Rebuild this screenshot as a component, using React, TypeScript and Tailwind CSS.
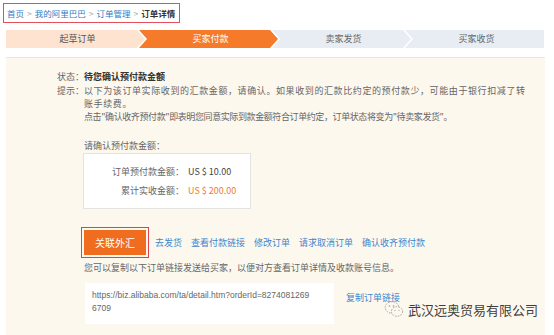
const steps = [
  { label: "起草订单", cls: "bg-[#fde3d0] text-[#555]" },
  { label: "买家付款", cls: "bg-[#f57a2a] text-white" },
  { label: "卖家发货", cls: "bg-[#e8edf3] text-[#666]" },
  { label: "买家收货", cls: "bg-[#e8edf3] text-[#666]" },
];

const shapes = [
  "[clip-path:polygon(0_0,calc(100%_-_8px)_0,100%_50%,calc(100%_-_8px)_100%,0_100%)]",
  "-ml-[6px] [clip-path:polygon(0_0,calc(100%_-_8px)_0,100%_50%,calc(100%_-_8px)_100%,0_100%,8px_50%)]",
  "-ml-[6px] [clip-path:polygon(0_0,calc(100%_-_8px)_0,100%_50%,calc(100%_-_8px)_100%,0_100%,8px_50%)]",
  "-ml-[6px] [clip-path:polygon(0_0,100%_0,100%_100%,0_100%,8px_50%)]",
];

const links = ["去发货", "查看付款链接", "修改订单", "请求取消订单", "确认收齐预付款"];

const WeChatMark = () => (
  <svg width="20" height="18" viewBox="0 0 20 18" fill="none">
    <ellipse cx="8" cy="7.5" rx="6.8" ry="5.8" stroke="#9a9a9a" strokeWidth="0.9" strokeDasharray="1.6 1.2" />
    <ellipse cx="13" cy="11.5" rx="5.6" ry="4.8" fill="#fdf8ee" stroke="#9a9a9a" strokeWidth="0.9" strokeDasharray="1.6 1.2" />
    <circle cx="5.5" cy="6" r="0.8" fill="#9a9a9a" />
    <circle cx="9.5" cy="6" r="0.8" fill="#9a9a9a" />
    <circle cx="11" cy="10.5" r="0.6" fill="#9a9a9a" />
    <circle cx="15" cy="10.5" r="0.6" fill="#9a9a9a" />
  </svg>
);

export default function App() {
  return (
    <div className="relative w-[554px] h-[335px] bg-white overflow-hidden flex flex-col font-['Noto_Sans_CJK_SC',sans-serif]">
      {/* breadcrumb */}
      <div className="ml-[3px] mt-[3px] w-[177px] h-[20px] border border-[#e4505a] flex items-center pl-[3px] gap-[3px] text-[8.5px] leading-none">
        <span className="text-[#2d7cc8]">首页</span>
        <span className="text-[#aaa]">&gt;</span>
        <span className="text-[#2d7cc8]">我的阿里巴巴</span>
        <span className="text-[#aaa]">&gt;</span>
        <span className="text-[#2d7cc8]">订单管理</span>
        <span className="text-[#aaa]">&gt;</span>
        <span className="text-[#333] font-bold">订单详情</span>
      </div>

      {/* steps */}
      <div className="mt-[7px] ml-[6px] w-[538px] h-[18px] flex">
        {steps.map((s, i) => (
          <div
            key={s.label}
            className={`flex-1 h-full flex items-center justify-center pl-[4px] text-[9px] ${s.cls} ${shapes[i]}`}
          >
            {s.label}
          </div>
        ))}
      </div>

      {/* panel */}
      <div className="mt-[9px] ml-[6px] w-[539px] flex-1 bg-[#fdf8ee] border-t border-[#f8e4cc] pl-[51px] pt-[12px] text-[9px] leading-[13px] text-[#666]">
        <div className="flex">
          <span className="w-[27px]">状态：</span>
          <span className="font-bold text-[#333]">待您确认预付款金额</span>
        </div>
        <div className="flex mt-[1px]">
          <span className="w-[27px] shrink-0">提示：</span>
          <div className="flex flex-col whitespace-nowrap">
            <span className="tracking-[0.6px]">以下为该订单实际收到的汇款金额，请确认。如果收到的汇款比约定的预付款少，可能由于银行扣减了转</span>
            <span className="tracking-[0.6px]">账手续费。</span>
            <span className="tracking-[-0.4px]">点击"确认收齐预付款"即表明您同意实际到款金额符合订单约定，订单状态将变为"待卖家发货"。</span>
          </div>
        </div>

        <div className="ml-[27px] mt-[16px]">请确认预付款金额：</div>
        <div className="ml-[26px] mt-[1px] w-[168px] h-[56px] bg-white border border-[#e3e3e3] pt-[8px] leading-[19px]">
          <div className="flex">
            <span className="w-[100px] text-right">订单预付款金额：</span>
            <span className="ml-[4px] text-[#444]">US $ 10.00</span>
          </div>
          <div className="flex">
            <span className="w-[100px] text-right">累计实收金额：</span>
            <span className="ml-[4px] text-[#f57a2a]">US $ 200.00</span>
          </div>
        </div>

        <div className="flex items-center mt-[18px] ml-[24px]">
          <div className="border-[1.5px] border-[#e0414c] p-[2px]">
            <div className="w-[62px] h-[25px] bg-[#f06d1f] text-white text-[10px] flex items-center justify-center">
              关联外汇
            </div>
          </div>
          <div className="ml-[6px] flex gap-[9px] text-[#3b87cf]">
            {links.map((l) => (
              <span key={l}>{l}</span>
            ))}
          </div>
        </div>

        <div className="ml-[27px] mt-[3px]">您可以复制以下订单链接发送给买家，以便对方查看订单详情及收款账号信息。</div>

        <div className="flex items-start ml-[28px] mt-[9px]">
          <div className="w-[249px] h-[41px] bg-white pt-[6px] pl-[7px] font-['Liberation_Sans',sans-serif] text-[8.5px] leading-[13px] text-[#666]">
            https://biz.alibaba.com/ta/detail.htm?orderId=8274081269
            <br />
            6709
          </div>
          <span className="ml-[12px] mt-[8px] text-[#3b87cf]">复制订单链接</span>
        </div>
      </div>

      {/* watermark */}
      <div className="absolute left-[384px] top-[300px] flex items-center gap-[4px]">
        <WeChatMark />
        <span className="text-[13px] leading-none text-[#3c3c3c]">武汉远奥贸易有限公司</span>
      </div>
    </div>
  );
}
